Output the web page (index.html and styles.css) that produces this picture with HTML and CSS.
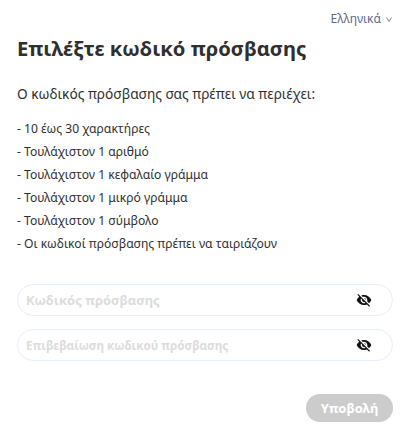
FILE: index.html
```html
<!DOCTYPE html>
<html lang="el">
<head>
<meta charset="utf-8">
<title>Επιλέξτε κωδικό πρόσβασης</title>
<link rel="stylesheet" href="styles.css">
</head>
<body>
<main class="page">
  <div class="lang"><span>Ελληνικά</span><svg class="chev" viewBox="0 0 6 5"><path d="M.5 .5l2.5 4 2.5-4" fill="none" stroke="#5a6b85" stroke-width=".8"/></svg></div>
  <h1 class="title">Επιλέξτε κωδικό πρόσβασης</h1>
  <p class="intro">Ο κωδικός πρόσβασης σας πρέπει να περιέχει:</p>
  <ul class="rules">
    <li>- 10 έως 30 χαρακτήρες</li>
    <li>- Τουλάχιστον 1 αριθμό</li>
    <li>- Τουλάχιστον 1 κεφαλαίο γράμμα</li>
    <li>- Τουλάχιστον 1 μικρό γράμμα</li>
    <li>- Τουλάχιστον 1 σύμβολο</li>
    <li>- Οι κωδικοί πρόσβασης πρέπει να ταιριάζουν</li>
  </ul>
  <div class="fields">
    <div class="field"><span class="ph ph-first">Κωδικός πρόσβασης</span>
      <svg class="eye" viewBox="0 0 24 24"><path d="M12 7c2.76 0 5 2.24 5 5 0 .65-.13 1.26-.36 1.83l2.92 2.92c1.51-1.26 2.7-2.89 3.43-4.75-1.73-4.39-6-7.5-11-7.5-1.4 0-2.74.25-3.98.7l2.16 2.16C10.74 7.13 11.35 7 12 7zM2 4.27l2.28 2.28.46.46C3.08 8.3 1.78 10.02 1 12c1.73 4.39 6 7.5 11 7.5 1.55 0 3.03-.3 4.38-.84l.42.42L19.73 22 21 20.73 3.27 3 2 4.27zM7.53 9.8l1.55 1.55c-.05.21-.08.43-.08.65 0 1.66 1.34 3 3 3 .22 0 .44-.03.65-.08l1.55 1.55c-.67.33-1.41.53-2.2.53-2.76 0-5-2.24-5-5 0-.79.2-1.53.53-2.2zm4.31-.78l3.15 3.15.02-.16c0-1.66-1.34-3-3-3l-.17.01z"/></svg>
    </div>
    <div class="field"><span class="ph">Επιβεβαίωση κωδικού πρόσβασης</span>
      <svg class="eye" viewBox="0 0 24 24"><path d="M12 7c2.76 0 5 2.24 5 5 0 .65-.13 1.26-.36 1.83l2.92 2.92c1.51-1.26 2.7-2.89 3.43-4.75-1.73-4.39-6-7.5-11-7.5-1.4 0-2.74.25-3.98.7l2.16 2.16C10.74 7.13 11.35 7 12 7zM2 4.27l2.28 2.28.46.46C3.08 8.3 1.78 10.02 1 12c1.73 4.39 6 7.5 11 7.5 1.55 0 3.03-.3 4.38-.84l.42.42L19.73 22 21 20.73 3.27 3 2 4.27zM7.53 9.8l1.55 1.55c-.05.21-.08.43-.08.65 0 1.66 1.34 3 3 3 .22 0 .44-.03.65-.08l1.55 1.55c-.67.33-1.41.53-2.2.53-2.76 0-5-2.24-5-5 0-.79.2-1.53.53-2.2zm4.31-.78l3.15 3.15.02-.16c0-1.66-1.34-3-3-3l-.17.01z"/></svg>
    </div>
  </div>
  <div class="actions"><button class="submit" type="button">Υποβολή</button></div>
</main>
</body>
</html>
```
FILE: styles.css
```css
html, body { margin: 0; padding: 0; background: #fff; }
body { width: 406px; height: 432px; overflow: hidden; font-family: "Noto Sans", "Open Sans", sans-serif; color: #2f2f2f; }
.page { padding: 11px 13px 0 17px; box-sizing: border-box; height: 432px; }
.lang { display: flex; justify-content: flex-end; align-items: center; gap: 5px; padding-right: 1px; font-size: 12px; line-height: 16px; color: #5a6b85; }
.chev { width: 6px; height: 5px; }
.title { margin: 7px 0 0; font-size: 20.2px; line-height: 28px; font-weight: 700; color: #2f2f2f; }
.intro { margin: 22px 0 0; font-size: 13.7px; line-height: 20px; }
.rules { list-style: none; margin: 13px 0 0; padding: 0; font-size: 12.1px; line-height: 23px; }
.fields { display: flex; flex-direction: column; gap: 13px; margin-top: 29px; }
.field { display: flex; align-items: center; justify-content: space-between; height: 32px; box-sizing: border-box; border: 1px solid #e6eefb; border-radius: 16px; padding: 0 20px 0 8px; }
.ph { font-size: 11.7px; font-weight: 700; color: #dcdcdc; }
.ph-first { font-size: 13px; }
.eye { width: 16px; height: 16px; fill: #111; }
.actions { display: flex; justify-content: flex-end; margin-top: 33px; }
.submit { width: 87px; height: 28px; border: 0; border-radius: 14px; background: #cccccc; color: #fff; font: 700 13px "Noto Sans", sans-serif; padding: 0; }
```
